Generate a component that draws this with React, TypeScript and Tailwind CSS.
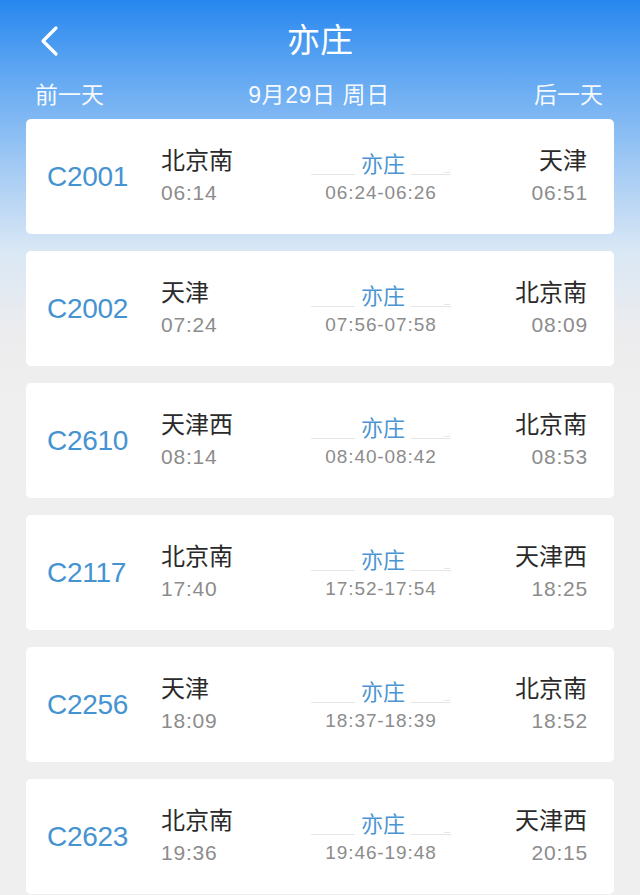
const trains = [
  { no: "C2001", from: "北京南", dep: "06:14", mid: "06:24-06:26", to: "天津", arr: "06:51" },
  { no: "C2002", from: "天津", dep: "07:24", mid: "07:56-07:58", to: "北京南", arr: "08:09" },
  { no: "C2610", from: "天津西", dep: "08:14", mid: "08:40-08:42", to: "北京南", arr: "08:53" },
  { no: "C2117", from: "北京南", dep: "17:40", mid: "17:52-17:54", to: "天津西", arr: "18:25" },
  { no: "C2256", from: "天津", dep: "18:09", mid: "18:37-18:39", to: "北京南", arr: "18:52" },
  { no: "C2623", from: "北京南", dep: "19:36", mid: "19:46-19:48", to: "天津西", arr: "20:15" },
];

function TrainCard({ t }: { t: (typeof trains)[number] }) {
  return (
    <div className="flex h-[115px] items-center rounded-[5px] bg-white pl-[21px] pr-[27px]">
      <div className="w-[114px] text-[28px] leading-none tracking-[-0.3px] text-[#4693d2]">{t.no}</div>
      <div className="w-[140px]">
        <div className="text-[24px] leading-[32px] text-[#2a2a2a]">{t.from}</div>
        <div className="text-[21px] leading-[32px] tracking-[0.8px] text-[#8c8c8c]">{t.dep}</div>
      </div>
      <div className="flex w-[160px] flex-col items-center pt-[4px]">
        <div className="flex items-end gap-[6px]">
          <div className="mb-[4px] h-px w-[44px] bg-[#e6e6e6]" />
          <div className="text-[22px] leading-[28px] text-[#4a94d2]">亦庄</div>
          <div className="relative mb-[4px] h-px w-[40px] bg-[#e6e6e6]">
            <div className="absolute right-0 top-[-2px] h-[3px] w-[6px] border-t border-[#e6e6e6] [transform:skewX(45deg)]" />
          </div>
        </div>
        <div className="text-[19px] leading-[28px] tracking-[0.9px] text-[#8c8c8c]">{t.mid}</div>
      </div>
      <div className="flex-1 text-right">
        <div className="text-[24px] leading-[32px] text-[#2a2a2a]">{t.to}</div>
        <div className="mr-[-1px] text-[21px] leading-[32px] tracking-[0.8px] text-[#8c8c8c]">{t.arr}</div>
      </div>
    </div>
  );
}

export default function App() {
  return (
    <div
      className="min-h-[895px] w-[640px] overflow-hidden bg-[linear-gradient(to_bottom,#2787ee_0px,#5ea6f2_70px,#a5cbf4_170px,#d9e7f5_250px,#ececee_330px,#efefef_400px)]"
      style={{ fontFamily: '"Liberation Sans", "Noto Sans CJK SC", sans-serif' }}
    >
      <div className="relative flex h-[80px] items-center justify-center">
        <svg className="absolute left-[38px] top-[25px]" width="24" height="32" viewBox="0 0 24 32" fill="none">
          <path d="M18 3 L5 16 L18 29" stroke="white" strokeWidth="3.2" strokeLinecap="round" strokeLinejoin="round" />
        </svg>
        <div className="text-[33px] leading-none text-white">亦庄</div>
      </div>
      <div className="flex h-[30px] items-center justify-between pl-[35px] pr-[37px] text-[23px] leading-none text-white/95">
        <span>前一天</span>
        <span className="tracking-[0.6px]">9月29日 周日</span>
        <span>后一天</span>
      </div>
      <div className="flex flex-col gap-[17px] px-[26px] pt-[9px]">
        {trains.map((t) => (
          <TrainCard key={t.no} t={t} />
        ))}
      </div>
    </div>
  );
}
